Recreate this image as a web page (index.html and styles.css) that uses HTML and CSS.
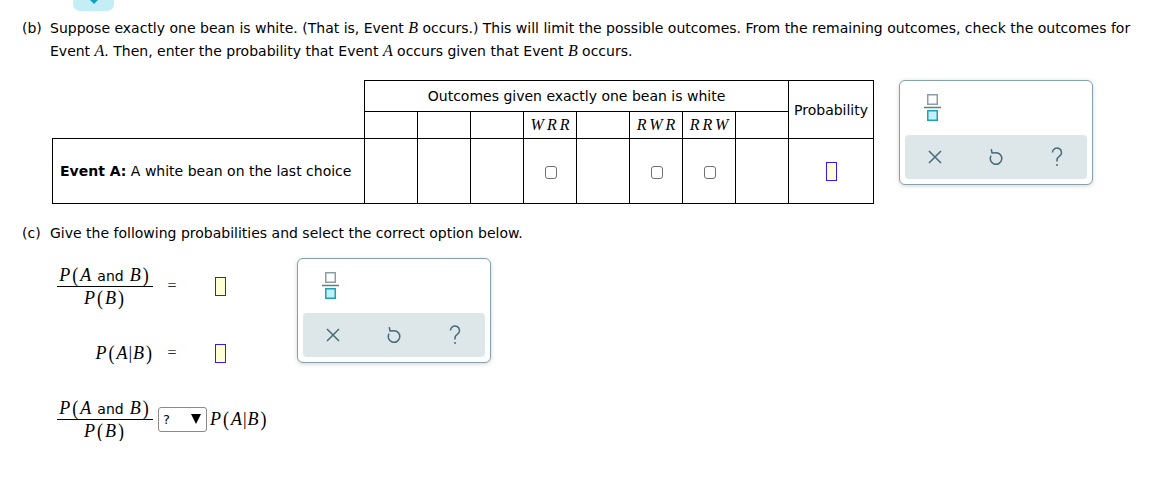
FILE: index.html
```html
<!DOCTYPE html>
<html lang="en">
<head>
<meta charset="utf-8">
<title>Conditional probability</title>
<link rel="stylesheet" href="styles.css">
</head>
<body>
<div class="tab-stub"><span class="tab-arrow"></span></div>

<div class="question q-b">
  <span class="q-label">(b)</span>
  <p class="q-text">Suppose exactly one bean is white. (That is, Event <i class="m">B</i> occurs.) This will limit the possible outcomes. From the remaining outcomes, check the outcomes for<br>Event <i class="m">A</i>. Then, enter the probability that Event <i class="m">A</i> occurs given that Event <i class="m">B</i> occurs.</p>
</div>

<div class="b-row">
  <table class="outcomes">
    <colgroup>
      <col class="c-event">
      <col class="c-out"><col class="c-out"><col class="c-out"><col class="c-out">
      <col class="c-out"><col class="c-out"><col class="c-out"><col class="c-out">
      <col class="c-prob">
    </colgroup>
    <tr class="r1">
      <td class="blank" rowspan="2"></td>
      <th colspan="8">Outcomes given exactly one bean is white</th>
      <th rowspan="2">Probability</th>
    </tr>
    <tr class="r2">
      <td></td><td></td><td></td>
      <td><span class="seq">WRR</span></td>
      <td></td>
      <td><span class="seq">RWR</span></td>
      <td><span class="seq">RRW</span></td>
      <td></td>
    </tr>
    <tr class="r3">
      <td class="event"><b>Event A:</b> A white bean on the last choice</td>
      <td></td><td></td><td></td>
      <td><span class="cb"></span></td>
      <td></td>
      <td><span class="cb"></span></td>
      <td><span class="cb"></span></td>
      <td></td>
      <td><span class="ans"></span></td>
    </tr>
  </table>

  <div class="keypad">
    <div class="kp-top">
      <svg class="ico-frac" width="18" height="27" viewBox="0 0 18 27">
        <rect x="3.75" y="0.75" width="9.5" height="9.5" fill="#fff" stroke="#8c9ea5" stroke-width="1.5"/>
        <line x1="0" y1="13.5" x2="17" y2="13.5" stroke="#5f7c87" stroke-width="1.5"/>
        <rect x="3.75" y="16.75" width="9.5" height="9.5" fill="#c3f0f7" stroke="#1aa2b7" stroke-width="1.5"/>
      </svg>
    </div>
    <div class="kp-bar">
      <span class="kp-btn">
        <svg width="14" height="14" viewBox="0 0 14 14"><path d="M1 1 L13 13 M13 1 L1 13" stroke="#456b7a" stroke-width="1.5" fill="none"/></svg>
      </span>
      <span class="kp-btn">
        <svg width="16" height="18" viewBox="0 0 16 18"><path d="M8 4.7 A5.8 5.8 0 1 1 3 7.6" stroke="#456b7a" stroke-width="1.5" fill="none"/><path d="M3.3 1.2 L4 5 L8.3 4.7" stroke="#456b7a" stroke-width="1.5" fill="none" stroke-linejoin="round"/></svg>
      </span>
      <span class="kp-btn">
        <svg width="14" height="20" viewBox="0 0 14 20"><path d="M2.5 5.5 A4.5 4.5 0 1 1 9.5 9.2 C7.8 10.4 7 11.3 7 13.2 V14.5" stroke="#456b7a" stroke-width="1.5" fill="none"/><circle cx="7" cy="18" r="1" fill="#456b7a"/></svg>
      </span>
    </div>
  </div>
</div>

<div class="question q-c">
  <span class="q-label">(c)</span>
  <p class="q-text">Give the following probabilities and select the correct option below.</p>
</div>

<div class="c-row">
  <div class="eqs">
    <div class="eq-row row-frac">
      <div class="lhs">
        <span class="frac">
          <span class="num math"><i>P</i><span class="pr">(</span><i>A</i><span class="txt">and</span><i>B</i><span class="pr">)</span></span>
          <span class="den math"><i>P</i><span class="pr">(</span><i>B</i><span class="pr">)</span></span>
        </span>
      </div>
      <span class="eqsign">=</span>
      <span class="ans"></span>
    </div>
    <div class="eq-row row-cond">
      <div class="lhs"><span class="math"><i>P</i><span class="pr">(</span><i>A</i><span class="bar">|</span><i>B</i><span class="pr">)</span></span></div>
      <span class="eqsign">=</span>
      <span class="ans"></span>
    </div>
    <div class="eq-row row-cmp">
      <span class="frac">
        <span class="num math"><i>P</i><span class="pr">(</span><i>A</i><span class="txt">and</span><i>B</i><span class="pr">)</span></span>
        <span class="den math"><i>P</i><span class="pr">(</span><i>B</i><span class="pr">)</span></span>
      </span>
      <span class="select"><span class="sel-q">?</span><span class="sel-arrow"></span></span>
      <span class="math after"><i>P</i><span class="pr">(</span><i>A</i><span class="bar">|</span><i>B</i><span class="pr">)</span></span>
    </div>
  </div>

  <div class="keypad">
    <div class="kp-top">
      <svg class="ico-frac" width="18" height="27" viewBox="0 0 18 27">
        <rect x="3.75" y="0.75" width="9.5" height="9.5" fill="#fff" stroke="#8c9ea5" stroke-width="1.5"/>
        <line x1="0" y1="13.5" x2="17" y2="13.5" stroke="#5f7c87" stroke-width="1.5"/>
        <rect x="3.75" y="16.75" width="9.5" height="9.5" fill="#c3f0f7" stroke="#1aa2b7" stroke-width="1.5"/>
      </svg>
    </div>
    <div class="kp-bar">
      <span class="kp-btn">
        <svg width="14" height="14" viewBox="0 0 14 14"><path d="M1 1 L13 13 M13 1 L1 13" stroke="#456b7a" stroke-width="1.5" fill="none"/></svg>
      </span>
      <span class="kp-btn">
        <svg width="16" height="18" viewBox="0 0 16 18"><path d="M8 4.7 A5.8 5.8 0 1 1 3 7.6" stroke="#456b7a" stroke-width="1.5" fill="none"/><path d="M3.3 1.2 L4 5 L8.3 4.7" stroke="#456b7a" stroke-width="1.5" fill="none" stroke-linejoin="round"/></svg>
      </span>
      <span class="kp-btn">
        <svg width="14" height="20" viewBox="0 0 14 20"><path d="M2.5 5.5 A4.5 4.5 0 1 1 9.5 9.2 C7.8 10.4 7 11.3 7 13.2 V14.5" stroke="#456b7a" stroke-width="1.5" fill="none"/><circle cx="7" cy="18" r="1" fill="#456b7a"/></svg>
      </span>
    </div>
  </div>
</div>
</body>
</html>
```

FILE: styles.css
```css
* { box-sizing: border-box; }
html, body { margin: 0; padding: 0; background: #fff; }
body {
  width: 1169px;
  font-family: Verdana, "DejaVu Sans", sans-serif;
  font-size: 14px;
  color: #000;
}

.tab-stub {
  width: 41px;
  height: 11px;
  margin-left: 73px;
  background: #c3eef5;
  border-radius: 0 0 7px 7px;
  display: flex;
  justify-content: center;
}
.tab-arrow {
  width: 0;
  height: 0;
  margin-left: 1px;
  border-left: 4px solid transparent;
  border-right: 4px solid transparent;
  border-top: 4px solid #14a0c4;
}

.question {
  display: flex;
  margin-left: 22px;
  line-height: 23px;
}
.q-b { margin-top: 6px; }
.q-c { margin-top: 18px; }
.q-label { width: 28px; flex: none; }
.q-text { margin: 0; white-space: nowrap; }
.m {
  font-family: "Liberation Serif", "DejaVu Serif", "Times New Roman", serif;
  font-style: italic;
  font-size: 16px;
  line-height: 1;
}

/* part b row */
.b-row {
  display: flex;
  align-items: flex-start;
  gap: 25px;
  margin: 17px 0 0 52px;
}
.outcomes {
  border-collapse: collapse;
  table-layout: fixed;
  width: 822px;
}
.c-event { width: 312px; }
.c-out { width: 53px; }
.c-prob { width: 85px; }
.outcomes td, .outcomes th {
  border: 1px solid #000;
  padding: 0;
  text-align: center;
  vertical-align: middle;
  font-weight: normal;
}
.outcomes td.blank { border: none; }
.r1 { height: 31px; }
.r2 { height: 27px; }
.r3 { height: 65px; }
.outcomes td.event { text-align: left; padding-left: 7px; }
.seq {
  font-family: "Liberation Serif", "DejaVu Serif", "Times New Roman", serif;
  font-style: italic;
  font-size: 16px;
  letter-spacing: 3px;
  margin-right: -3px;
}
.cb {
  display: inline-block;
  width: 12px;
  height: 13px;
  border: 1px solid #707070;
  border-radius: 3px;
  background: #fff;
  vertical-align: middle;
  margin-left: 1px;
}
.ans {
  display: inline-block;
  width: 11px;
  height: 19px;
  border: 1.5px solid #3a14ff;
  background: #ffffd6;
  vertical-align: middle;
}

/* keypad */
.keypad {
  flex: none;
  width: 194px;
  height: 105px;
  border: 1px solid #86a2aa;
  border-radius: 6px;
  box-shadow: 0 1px 4px rgba(0, 0, 0, 0.18);
  background: #fff;
  padding: 0 5px 5px;
  display: flex;
  flex-direction: column;
}
.kp-top {
  height: 54px;
  padding: 13px 0 0 19px;
}
.ico-frac { display: block; }
.kp-bar {
  flex: 1;
  background: #dde6e9;
  border-radius: 4px;
  display: grid;
  grid-template-columns: 1fr 1fr 1fr;
  align-items: center;
  justify-items: center;
}
.kp-btn { display: flex; align-items: center; justify-content: center; }
.kp-btn svg { display: block; }

/* part c */
.c-row {
  display: flex;
  align-items: flex-start;
  margin: 13px 0 0 57px;
}
.eqs {
  width: 240px;
  flex: none;
  padding-top: 6px;
}
.eq-row {
  display: flex;
  align-items: center;
}
.row-frac { height: 44px; }
.row-cond { height: 24px; margin-top: 33px; }
.row-cmp { height: 44px; margin-top: 32px; }
.lhs {
  width: 97px;
  display: flex;
  justify-content: flex-end;
  flex: none;
}
.row-frac .lhs { justify-content: flex-start; }
.eqsign {
  width: 36px;
  text-align: center;
  font-family: "Liberation Serif", "Times New Roman", serif;
  font-size: 16px;
  color: #333;
}
.eq-row .ans { margin-left: 25px; }

.math {
  font-family: "Liberation Serif", "DejaVu Serif", "Times New Roman", serif;
  font-size: 18px;
  white-space: nowrap;
  line-height: 20px;
}
.math i { font-style: italic; }
.math .pr { display: inline-block; margin: 0 2px; transform: scaleY(1.12); }
.math .txt {
  font-family: Verdana, "DejaVu Sans", sans-serif;
  font-size: 14px;
  margin: 0 6px;
}
.math .bar { margin: 0 1px; }

.frac {
  display: inline-flex;
  flex-direction: column;
  align-items: center;
  width: 96px;
}
.frac .num { height: 21px; display: block; text-align: center; }
.frac .den {
  display: block;
  align-self: stretch;
  text-align: center;
  border-top: 1px solid #000;
  height: 22px;
  padding-top: 1px;
}

.select {
  display: inline-flex;
  align-items: center;
  justify-content: space-between;
  width: 49px;
  height: 25px;
  margin-left: 5px;
  padding: 0 5px 0 4px;
  border: 1px solid #8a8a8a;
  border-radius: 3px;
  background: #fff;
  font-size: 13px;
}
.sel-arrow {
  width: 0;
  height: 0;
  border-left: 5.5px solid transparent;
  border-right: 5.5px solid transparent;
  border-top: 10px solid #000;
}
.math.after { margin-left: 3px; }
```
